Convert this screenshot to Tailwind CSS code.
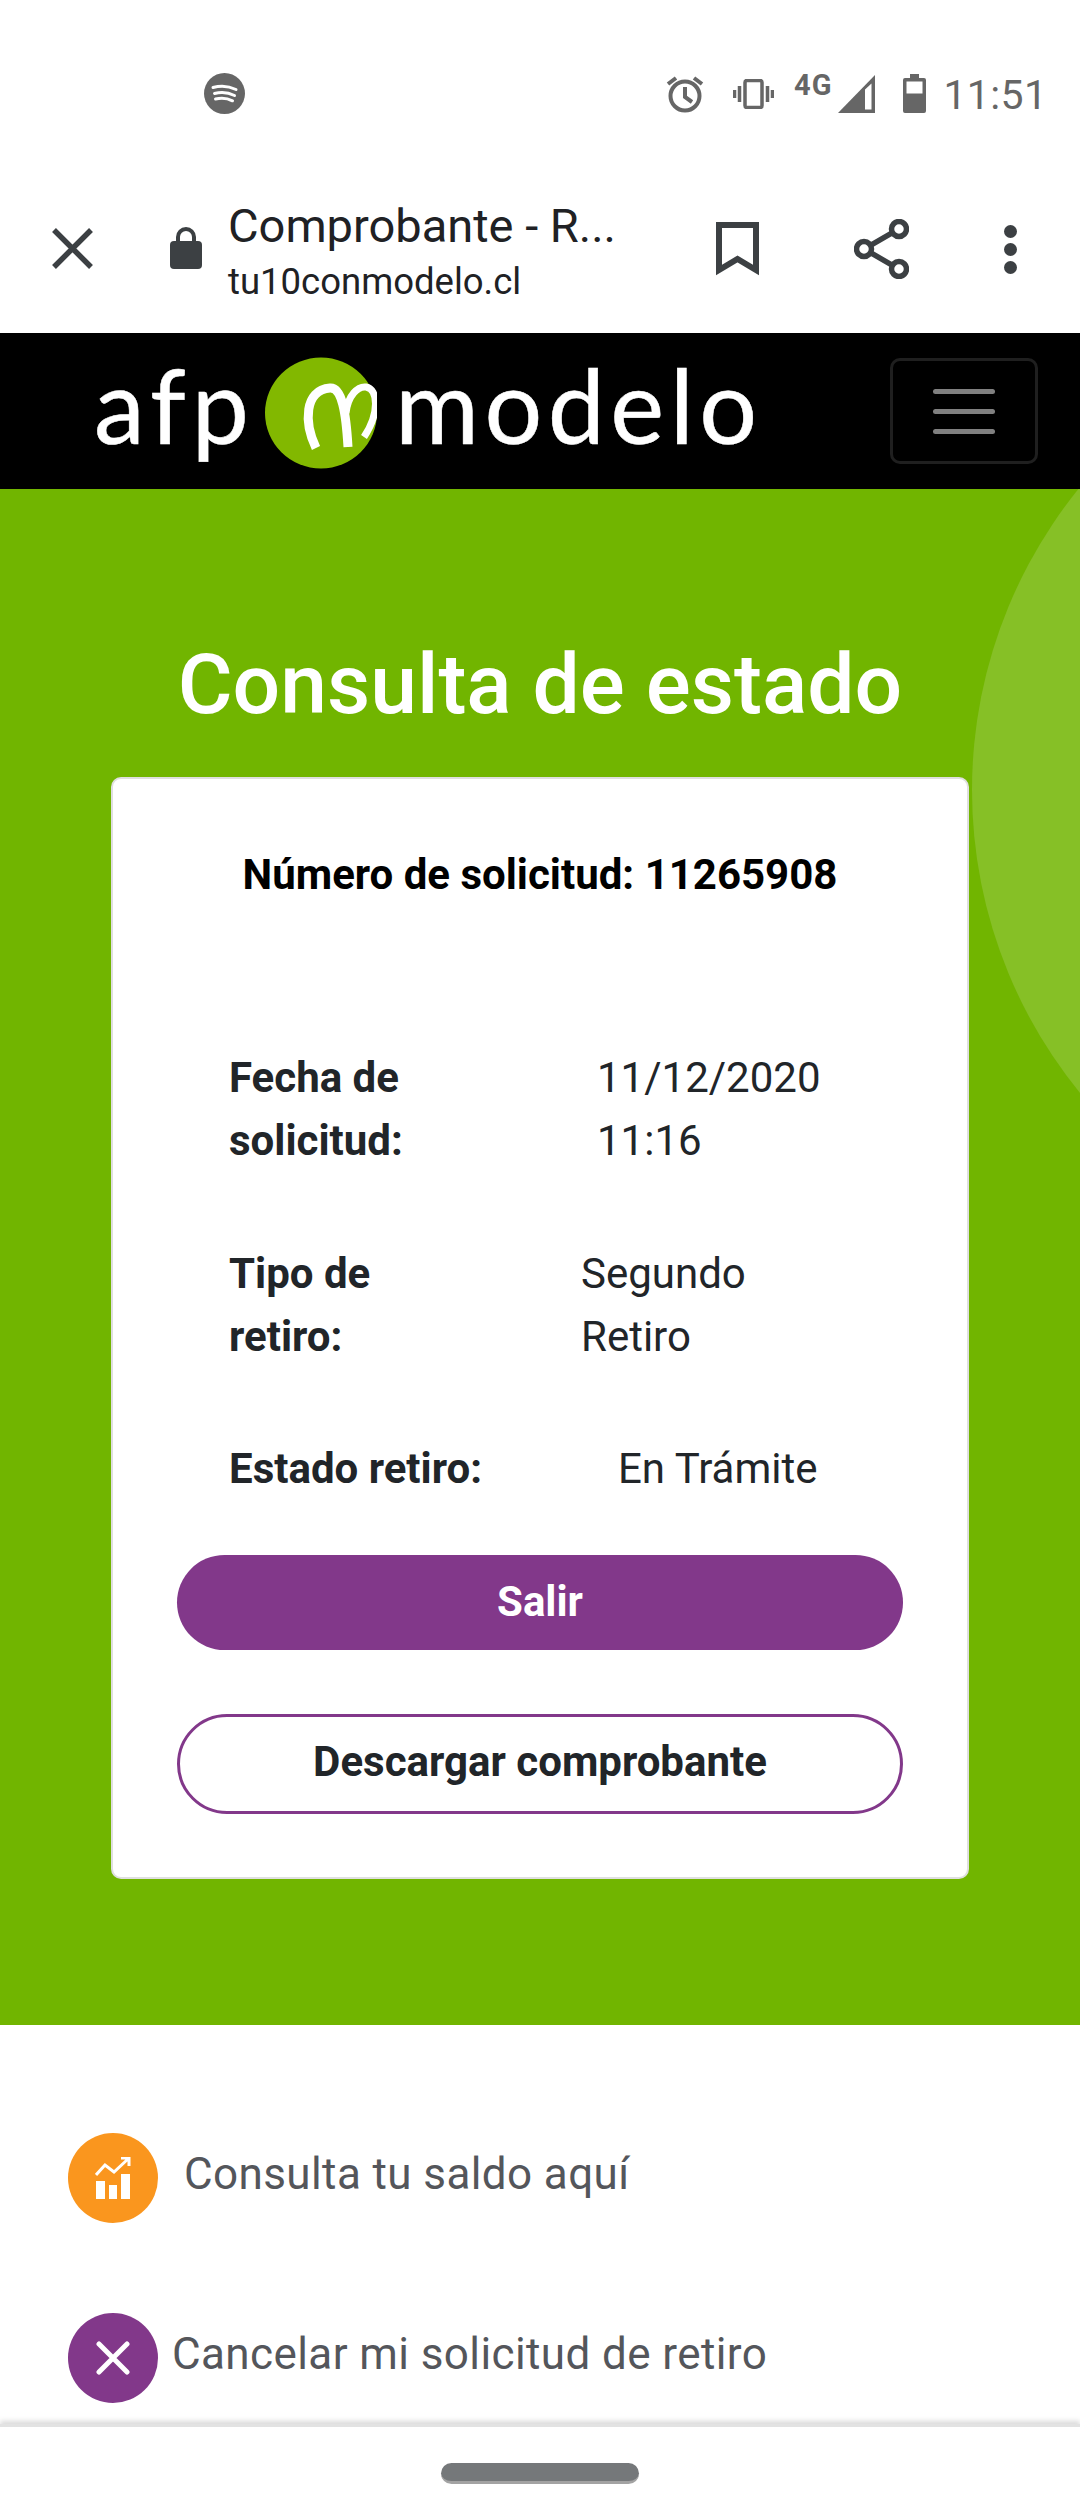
<!DOCTYPE html>
<html lang="es">

<head>
    <meta charset="UTF-8">
    <meta name="viewport" content="width=device-width, initial-scale=1.0">
    <title>Comprobante - Retiro</title>
    <script src="https://cdn.jsdelivr.net/npm/@tailwindcss/browser@4"></script>
</head>

<body class="bg-white font-['Roboto',sans-serif] text-[#212529]">
<div class="w-[1080px] h-[2520px] overflow-hidden flex flex-col">

    <!-- status bar -->
    <div class="h-[130px] shrink-0 flex items-start pt-[73px] text-[#666666]">
        <svg class="ml-[204px] w-[41px] h-[41px]" viewBox="0 0 41 41">
            <circle cx="20.5" cy="20.5" r="20.5" fill="#666666"/>
            <path d="M9 14.5c7-2 16-1.500 23 2M10.500 20.500c6-1.500 14-1 20 2M11.500 26c5-1.200 12-.8 17 1.800" fill="none" stroke="#fff" stroke-width="3" stroke-linecap="round"/>
        </svg>
        <svg class="ml-[421px] mt-[2px] w-[38px] h-[38px]" viewBox="0 0 38 38" fill="none" stroke="#666666" stroke-width="4">
            <circle cx="19" cy="21" r="14.500"/>
            <path d="M19 12v10l7 5M2 9l8-6M36 9l-8-6"/>
        </svg>
        <svg class="ml-[29px] mt-[6px] w-[41px] h-[30px]" viewBox="0 0 41 30" fill="none" stroke="#666666" stroke-width="3.500">
            <rect x="12" y="1.500" width="17" height="27" rx="2"/>
            <path d="M6.500 7v16M1.500 11v8M34.500 7v16M39.500 11v8"/>
        </svg>
        <span class="ml-[20px] mt-[-2px] text-[29px] leading-[29px] font-bold tracking-[1px]">4G</span>
        <svg class="ml-[6px] mt-[2px] w-[37px] h-[38px]" viewBox="0 0 37 38">
            <path d="M37 0v38H0z" fill="#666666"/>
            <path d="M33.500 8.500v26H27v-20z" fill="#fff"/>
        </svg>
        <svg class="ml-[28px] mt-[1px] w-[23px] h-[39px]" viewBox="0 0 23 39">
            <path d="M7 0h9v4h5a2 2 0 0 1 2 2v31a2 2 0 0 1-2 2H2a2 2 0 0 1-2-2V6a2 2 0 0 1 2-2h5z" fill="#666666"/>
            <rect x="3.500" y="7.500" width="16" height="12" fill="#fff"/>
        </svg>
        <span class="ml-[17px] mt-[-1px] text-[41px] leading-[46px] tracking-[.4px]">11:51</span>
    </div>

    <!-- browser toolbar -->
    <div class="h-[203px] shrink-0 relative flex items-start">
        <svg class="ml-[52px] mt-[98px] w-[41px] h-[41px]" viewBox="0 0 41 41" stroke="#3c4043" stroke-width="5.500">
            <path d="M2 2l37 37M39 2L2 39"/>
        </svg>
        <svg class="ml-[77px] mt-[97px] w-[32px] h-[42px]" viewBox="0 0 32 42">
            <path d="M8 17v-7a8 8 0 0 1 16 0v7" fill="none" stroke="#3c4043" stroke-width="4"/>
            <rect y="14" width="32" height="28" rx="4" fill="#3c4043"/>
        </svg>
        <div class="ml-[26px] mt-[68px] w-[450px]">
            <p class="text-[47px] leading-[56px] text-[#202124]">Comprobante - R...</p>
            <p class="text-[36.5px] leading-[48px] text-[#202124] mt-[4px]">tu10conmodelo.cl</p>
        </div>
        <svg class="ml-[38px] mt-[92px] w-[43px] h-[54px]" viewBox="0 0 43 54" fill="none" stroke="#3c4043" stroke-width="6">
            <path d="M3 48V3h37v45L21.500 37z"/>
        </svg>
        <svg class="ml-[95px] mt-[89px] w-[55px] h-[60px]" viewBox="0 0 55 60" fill="none" stroke="#3c4043" stroke-width="5.500">
            <circle cx="45" cy="10" r="7.500"/>
            <circle cx="10" cy="30" r="7.500"/>
            <circle cx="45" cy="50" r="7.500"/>
            <path d="M16.500 26.300L38.500 13.700M16.500 33.700L38.500 46.300"/>
        </svg>
        <div class="ml-[95px] mt-[95px] flex flex-col gap-[5px]">
            <div class="w-[13px] h-[13px] rounded-full bg-[#3c4043]"></div>
            <div class="w-[13px] h-[13px] rounded-full bg-[#3c4043]"></div>
            <div class="w-[13px] h-[13px] rounded-full bg-[#3c4043]"></div>
        </div>
    </div>

    <!-- site navbar -->
    <div class="h-[156px] shrink-0 bg-black flex items-start">
        <div class="ml-[94px] mt-[24px] w-[676px] h-[112px] flex items-start text-white font-['Lato',sans-serif] text-[102px] leading-[112px] font-normal [-webkit-text-stroke:0.5px_white]">
            <span class="w-[171px] tracking-[6px] mt-[-8px]">afp</span>
            <svg class="w-[112px] h-[112px] shrink-0" viewBox="0 0 112 112">
                <ellipse cx="56" cy="56" rx="56" ry="55.500" fill="#82b800"/>
                <path d="M51 91C39 66 39 33 65 31 77 30 81 56 83 90" fill="none" stroke="#fff" stroke-width="9"/>
                <path d="M81 56C83 38 93 29 101 30 113 32 115 56 99 80" fill="none" stroke="#fff" stroke-width="7"/>
            </svg>
            <span class="ml-[18px] tracking-[5.500px] mt-[-8px]">modelo</span>
        </div>
        <div class="ml-[120px] mt-[25px] w-[148px] h-[106px] rounded-[10px] border-[3px] border-[#1f1f1f] flex flex-col items-center justify-center gap-[15px]">
            <div class="w-[62px] h-[5px] bg-[#808080] rounded-sm"></div>
            <div class="w-[62px] h-[5px] bg-[#808080] rounded-sm"></div>
            <div class="w-[62px] h-[5px] bg-[#808080] rounded-sm"></div>
        </div>
    </div>

    <!-- green section -->
    <div class="h-[1536px] shrink-0 bg-[#71b500] relative overflow-hidden pt-[143px]">
        <div class="absolute left-[972px] top-[-178px] w-[958px] h-[958px] rounded-full bg-white/15"></div>
        <h1 class="relative text-center text-white font-medium text-[84px] leading-[106px]">Consulta de estado</h1>
        <div class="relative mx-[111px] mt-[39px] h-[1102px] bg-white rounded-[10px] border-2 border-[#dfdfdf] px-[64px] pt-[64px]">
            <p class="text-center font-bold text-[42px] leading-[63px] text-black">Número de solicitud: 11265908</p>
            <div class="mt-[140px] flex text-[42px] leading-[63px]">
                <div class="ml-[52px] w-[368px] font-bold">Fecha de<br>solicitud:</div>
                <div>11/12/2020<br>11:16</div>
            </div>
            <div class="mt-[70px] flex text-[42px] leading-[63px]">
                <div class="ml-[52px] w-[352px] font-bold">Tipo de<br>retiro:</div>
                <div>Segundo<br>Retiro</div>
            </div>
            <div class="mt-[69px] flex text-[42px] leading-[63px]">
                <div class="ml-[52px] w-[389px] font-bold">Estado retiro:</div>
                <div>En Trámite</div>
            </div>
            <button class="mt-[55px] w-full h-[95px] rounded-full bg-[#82388a] text-white font-bold text-[42px] pb-[2px]">Salir</button>
            <button class="mt-[64px] w-full h-[100px] rounded-full bg-white border-[3px] border-[#82388a] font-bold text-[42px] pb-[6px]">Descargar comprobante</button>
        </div>
    </div>

    <!-- footer links -->
    <div class="flex-1 pt-[108px] text-[44px] leading-[63px] text-[#54565b] tracking-[.4px]">
        <div class="flex items-center ml-[68px] h-[90px]">
            <div class="w-[90px] h-[90px] rounded-full bg-[#fa961e] flex items-center justify-center">
                <svg class="w-[36px] h-[42px]" viewBox="0 0 36 42" fill="#fff">
                    <rect x="1" y="24" width="9" height="18"/>
                    <rect x="14" y="28" width="8" height="14"/>
                    <rect x="26" y="17" width="9" height="25"/>
                    <path d="M1 18l9-10 9 7L33 2M26 1h8v8" fill="none" stroke="#fff" stroke-width="3"/>
                </svg>
            </div>
            <span class="ml-[26px] mb-[8px]">Consulta tu saldo aquí</span>
        </div>
        <div class="flex items-center ml-[68px] h-[90px] mt-[90px]">
            <div class="w-[90px] h-[90px] rounded-full bg-[#82388a] flex items-center justify-center">
                <svg class="w-[34px] h-[34px]" viewBox="0 0 34 34" stroke="#fff" stroke-width="5" stroke-linecap="round">
                    <path d="M3 3l28 28M31 3L3 31"/>
                </svg>
            </div>
            <span class="ml-[14px] mb-[8px]">Cancelar mi solicitud de retiro</span>
        </div>
    </div>

    <!-- gesture bar -->
    <div class="h-[96px] shrink-0 bg-white border-t-[3px] border-[#e2e2e2] shadow-[0_-3px_5px_rgba(0,0,0,0.15)] relative flex justify-center pt-[36px]">
        <div class="w-[198px] h-[21px] rounded-full bg-[#75787a] border-b-[3px] border-[#a3a3a3]"></div>
    </div>
</div>
</body>

</html>
